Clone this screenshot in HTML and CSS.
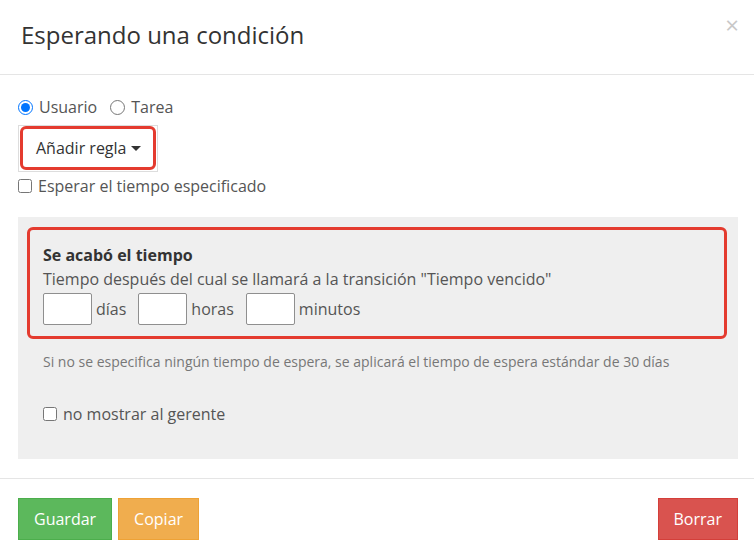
FILE: index.html
```html
<!DOCTYPE html>
<html lang="es">
<head>
    <meta charset="UTF-8">
    <title>Esperando una condición</title>
    <link rel="stylesheet" href="styles.css">
</head>
<body>
    <div class="modal">
        <div class="modal-header">
            <h4 class="modal-title">Esperando una condición</h4>
            <span class="close">&times;</span>
        </div>

        <div class="modal-body">
            <div class="radio-row">
                <label><input type="radio" name="tipo" checked> Usuario</label>
                <label><input type="radio" name="tipo"> Tarea</label>
            </div>

            <div class="rule-wrap">
                <button type="button" class="rule-btn">Añadir regla <span class="caret"></span></button>
            </div>

            <label class="check"><input type="checkbox"> Esperar el tiempo especificado</label>

            <div class="panel">
                <div class="timeout-box">
                    <div class="timeout-title">Se acabó el tiempo</div>
                    <div class="timeout-desc">Tiempo después del cual se llamará a la transición "Tiempo vencido"</div>
                    <div class="time-row">
                        <input type="text" class="time-input"><span class="unit">días</span>
                        <input type="text" class="time-input"><span class="unit">horas</span>
                        <input type="text" class="time-input"><span class="unit">minutos</span>
                    </div>
                </div>
                <p class="note">Si no se especifica ningún tiempo de espera, se aplicará el tiempo de espera estándar de 30 días</p>
                <label class="check manager"><input type="checkbox"> no mostrar al gerente</label>
            </div>
        </div>

        <div class="modal-footer">
            <button type="button" class="btn btn-success">Guardar</button>
            <button type="button" class="btn btn-warning">Copiar</button>
            <button type="button" class="btn btn-danger right">Borrar</button>
        </div>
    </div>
</body>
</html>
```

FILE: styles.css
```css
* {
    margin: 0;
    padding: 0;
    box-sizing: border-box;
}

body {
    font-family: 'Open Sans', 'Lato', sans-serif;
    background: #fff;
    color: #555;
    font-size: 16px;
}

.modal {
    width: 754px;
    height: 554px;
    background: #fff;
}

.modal-header {
    height: 75px;
    padding: 20px 15px 0 21px;
    border-bottom: 1px solid #e5e5e5;
    display: flex;
    justify-content: space-between;
    align-items: flex-start;
}

.modal-title {
    font-size: 24px;
    font-weight: 400;
    color: #333;
    line-height: 30px;
}

.close {
    color: #c8c8c8;
    font-size: 24px;
    line-height: 20px;
    margin-top: -5px;
}

.modal-body {
    padding: 22px 16px 19px 18px;
}

.radio-row {
    display: flex;
    gap: 13px;
    line-height: 20px;
}

.radio-row label,
.check {
    display: flex;
    align-items: center;
    gap: 6px;
}

.radio-row input {
    width: 15px;
    height: 15px;
    accent-color: #0075ff;
}

.rule-wrap {
    display: inline-block;
    margin-top: 8px;
    border: 1px solid #ddd;
    padding: 0 1px 1px 1px;
}

.rule-btn {
    font-family: inherit;
    font-size: 16px;
    color: #333;
    background: #fff;
    border: 3px solid #e43b2f;
    border-radius: 6px;
    padding: 10px 12px 10px 13px;
    line-height: 18px;
    display: flex;
    align-items: center;
    gap: 5px;
}

.caret {
    width: 0;
    height: 0;
    border-left: 5px solid transparent;
    border-right: 5px solid transparent;
    border-top: 5px solid #333;
}

.check input {
    width: 14px;
    height: 14px;
}

.modal-body > .check {
    margin-top: 4px;
    line-height: 20px;
}

.panel {
    margin-top: 21px;
    background: #efefef;
    padding: 10px 11px 35px 9px;
}

.timeout-box {
    border: 3px solid #e43b2f;
    border-radius: 6px;
    padding: 13px 13px 11px 13px;
}

.timeout-title {
    font-weight: 700;
    color: #333;
    line-height: 24px;
}

.timeout-desc {
    line-height: 24px;
}

.time-row {
    display: flex;
    align-items: center;
    margin-top: 2px;
}

.time-input {
    width: 49px;
    height: 32px;
    border: 1px solid #8f8f8f;
    border-radius: 2px;
    background: #fff;
}

.unit {
    margin: 0 12px 0 4px;
}

.note {
    font-size: 14px;
    color: #777;
    padding: 14px 0 0 16px;
    line-height: 18px;
}

.manager {
    margin: 33px 0 0 16px;
    line-height: 20px;
}

.modal-footer {
    border-top: 1px solid #e5e5e5;
    padding: 19px 16px 0 18px;
    display: flex;
    gap: 6px;
}

.btn {
    font-family: inherit;
    font-size: 16px;
    color: #fff;
    height: 42px;
    padding: 0 15px;
    border: 1px solid;
    border-radius: 0;
}

.btn-success {
    background: #5cb85c;
    border-color: #4cae4c;
}

.btn-warning {
    background: #f0ad4e;
    border-color: #eea236;
}

.btn-danger {
    background: #d9534f;
    border-color: #d43f3a;
}

.right {
    margin-left: auto;
}
```
